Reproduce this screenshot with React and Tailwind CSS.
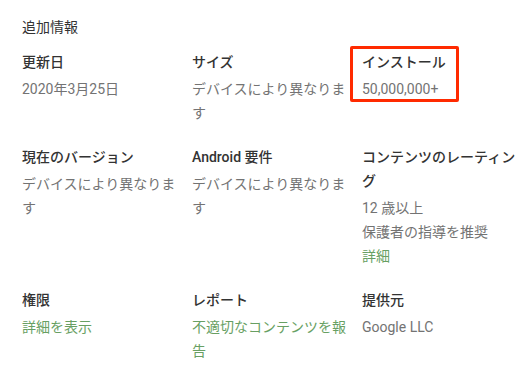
const rows = [
  [
    { title: '更新日', lines: [{ text: '2020年3月25日' }] },
    { title: 'サイズ', lines: [{ text: 'デバイスにより異なります' }] },
    { title: 'インストール', lines: [{ text: '50,000,000+' }], marked: true },
  ],
  [
    { title: '現在のバージョン', lines: [{ text: 'デバイスにより異なります' }] },
    { title: 'Android 要件', lines: [{ text: 'デバイスにより異なります' }] },
    {
      title: 'コンテンツのレーティング',
      lines: [{ text: '12 歳以上' }, { text: '保護者の指導を推奨' }, { text: '詳細', link: true }],
    },
  ],
  [
    { title: '権限', lines: [{ text: '詳細を表示', link: true }] },
    { title: 'レポート', lines: [{ text: '不適切なコンテンツを報告', link: true }] },
    { title: '提供元', lines: [{ text: 'Google LLC' }] },
  ],
];

function InfoCell({ title, lines }) {
  return (
    <>
      <div className="text-[14px] font-medium leading-6 text-[#333]">{title}</div>
      <div className="mt-[3px]">
        {lines.map((l) => (
          <div key={l.text} className={`text-[14px] leading-6 ${l.link ? 'text-[#689f63]' : 'text-[#737373]'}`}>
            {l.text}
          </div>
        ))}
      </div>
    </>
  );
}

export default function App() {
  return (
    <div
      className="min-h-screen bg-white px-[22px] pt-[15px]"
      style={{ fontFamily: 'Roboto, "Noto Sans CJK JP", sans-serif' }}
    >
      <h2 className="text-[14px] leading-6 text-[#333]">追加情報</h2>
      <div className="mt-[11px] grid grid-cols-[160px_160px_160px] gap-x-[10px] gap-y-5">
        {rows.flat().map((cell) => (
          <div key={cell.title}>
            {cell.marked ? (
              <div className="relative inline-block">
                <InfoCell {...cell} />
                <span className="pointer-events-none absolute -top-1 -bottom-px -left-3 -right-[13px] rounded-[2px] border-[3px] border-[#ff2a00]" />
              </div>
            ) : (
              <InfoCell {...cell} />
            )}
          </div>
        ))}
      </div>
    </div>
  );
}
